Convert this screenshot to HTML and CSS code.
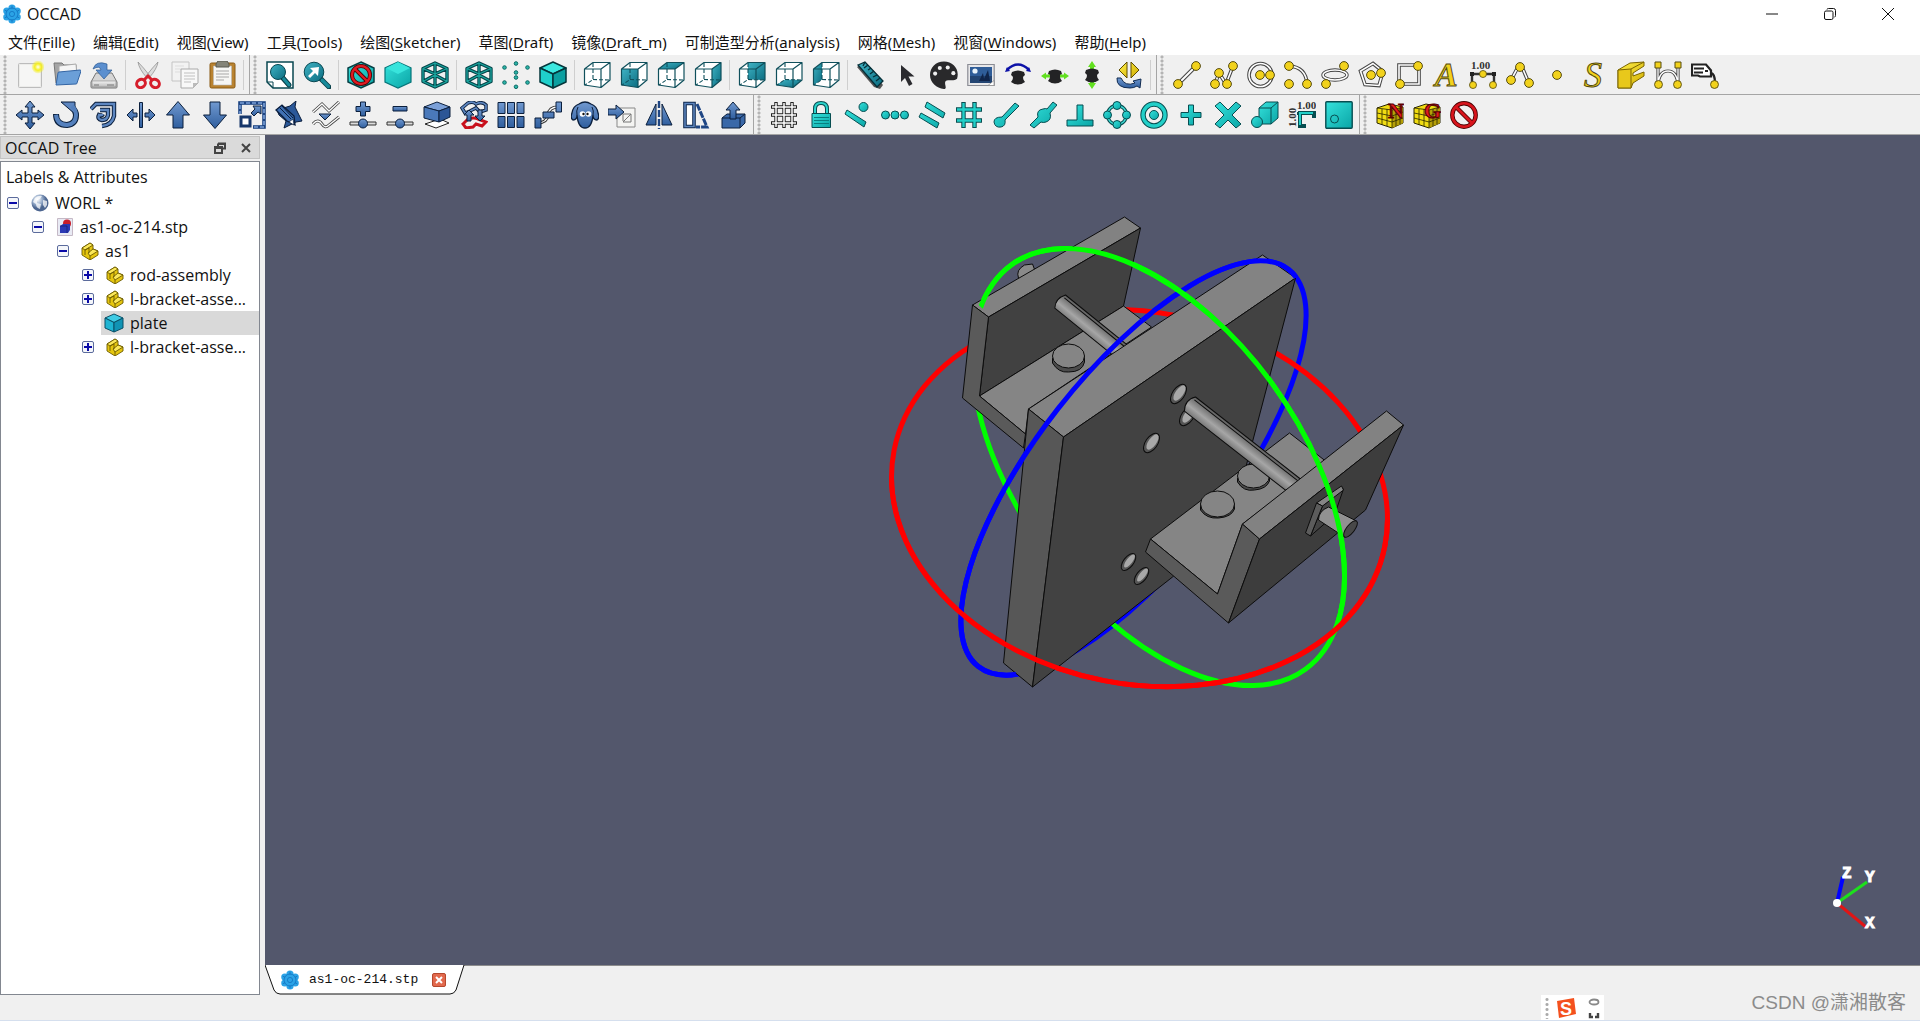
FILE: index.html
```html
<!DOCTYPE html>
<html lang="zh-CN">
<head>
  <meta charset="UTF-8" />
  <meta name="viewport" content="width=device-width, initial-scale=1.0"/>
  <title>OCCAD</title>
  <link rel="stylesheet" href="styles.css">
</head>
<body>

  <!-- icon sprite -->
  <svg class="sprite" aria-hidden="true">
    <defs>
      <linearGradient id="gBlue" x1="0" y1="0" x2="0" y2="1"><stop offset="0" stop-color="#7199d0"/><stop offset="1" stop-color="#2f5e9e"/></linearGradient>
      <linearGradient id="gTeal" x1="0" y1="0" x2="1" y2="1"><stop offset="0" stop-color="#35e2dc"/><stop offset="1" stop-color="#0aa5a6"/></linearGradient>
      <linearGradient id="gSea" x1="0" y1="0" x2="1" y2="1"><stop offset="0" stop-color="#3fb3c4"/><stop offset="1" stop-color="#0b6c80"/></linearGradient>
      <linearGradient id="gYel" x1="0" y1="0" x2="1" y2="1"><stop offset="0" stop-color="#fff04a"/><stop offset="1" stop-color="#d0ac00"/></linearGradient>
      <linearGradient id="gGrey" x1="0" y1="0" x2="0" y2="1"><stop offset="0" stop-color="#f4f4f4"/><stop offset="1" stop-color="#b9b9b9"/></linearGradient>
      <radialGradient id="gGlow"><stop offset="0" stop-color="#fffff0"/><stop offset=".5" stop-color="#f5ef20"/><stop offset="1" stop-color="#f5ef20" stop-opacity=".15"/></radialGradient>
      <radialGradient id="gGlobe" cx=".35" cy=".3"><stop offset="0" stop-color="#fff"/><stop offset=".6" stop-color="#93a9c8"/><stop offset="1" stop-color="#4d6690"/></radialGradient>
      <linearGradient id="gRod" gradientUnits="userSpaceOnUse" x1="0" y1="18" x2="0" y2="0"><stop offset="0" stop-color="#777"/><stop offset=".4" stop-color="#a6a6a6"/><stop offset="1" stop-color="#5e5e5e"/></linearGradient>

      <symbol id="logo" viewBox="0 0 20 20"><g fill="#2ba3e6"><circle cx="10" cy="4" r="3.6"/><circle cx="10" cy="16" r="3.6"/><circle cx="4.8" cy="7" r="3.6"/><circle cx="15.2" cy="7" r="3.6"/><circle cx="4.8" cy="13" r="3.6"/><circle cx="15.2" cy="13" r="3.6"/><circle cx="10" cy="10" r="5"/></g><g fill="none" stroke="#1272c0" stroke-width=".8"><circle cx="10" cy="10" r="6"/><circle cx="10" cy="10" r="2.6"/><path d="M10 1.500v3M10 15.500v3M2.600 6l2.600 1.500M14.800 12.500l2.600 1.500M2.600 14l2.600-1.500M14.800 7.500l2.600-1.500"/></g></symbol>

      <!-- file -->
      <symbol id="new" viewBox="0 0 28 28"><rect x="2.500" y="2.500" width="23" height="24" rx="1" fill="#ececea" stroke="#bcbcbc"/><rect x="4" y="4" width="20" height="21" fill="#f6f6f5"/><circle cx="22" cy="6" r="6.500" fill="url(#gGlow)"/></symbol>
      <symbol id="open" viewBox="0 0 28 28"><path d="M1 2h8l2 2h12v18H3z" fill="#a5a5a5" stroke="#777"/><path d="M6 5l17-2 1 12H6z" fill="#f5f5f5" stroke="#aaa"/><path d="M3 24L5 12q0-1 1-1l21-2q1 0 1 1l-4 12q0 1-1 1z" fill="#6b9fd8" stroke="#3465a4"/></symbol>
      <symbol id="save" viewBox="0 0 28 28"><path d="M6 12h16l5 9v5q0 1-1 1H2q-1 0-1-1v-5z" fill="#d6d6d6" stroke="#777"/><path d="M2 20h24v6H2z" fill="url(#gGrey)" stroke="#888" stroke-width=".6"/><path d="M4 24h5M17 24h7" stroke="#777"/><path d="M3 8Q6-1 17 3v6h5l-8 9-8-9h5Q10 4 3 8z" fill="#5b8fcf" stroke="#2d5a92" stroke-width=".7"/></symbol>
      <symbol id="cut" viewBox="0 0 28 28"><path d="M4 1q1 7 9 16l3-2Q9 6 4 1zM24 1q-1 7-9 16l-3-2Q19 6 24 1z" fill="#ddd" stroke="#888" stroke-width=".7"/><g fill="none" stroke="#d61f2c" stroke-width="3"><ellipse cx="7" cy="22.500" rx="4.500" ry="4" transform="rotate(-35 7 22.500)"/><ellipse cx="21" cy="22.500" rx="4.500" ry="4" transform="rotate(35 21 22.500)"/><path d="M10 19l4-4 4 4"/></g></symbol>
      <symbol id="copy" viewBox="0 0 28 28"><path d="M1 1h17v19H1z" fill="#f2f2f2" stroke="#c4c4c4"/><path d="M4 5h9M4 8h6M4 11h5" stroke="#ddd"/><path d="M10 8h17v14l-5 5H10z" fill="#f8f8f8" stroke="#aaa"/><path d="M13 12h11M13 15h11M13 18h11M13 21h7" stroke="#c0c0c0"/><path d="M27 22h-5v5z" fill="#bbb"/></symbol>
      <symbol id="paste" viewBox="0 0 28 28"><rect x="2" y="2" width="25" height="25" rx="1.500" fill="#b98331" stroke="#8a5a14"/><path d="M5.500 5h18v19h-18z" fill="#f6f6f4" stroke="#bbb" stroke-width=".6"/><path d="M8 10h13M8 13h13M8 16h13M8 19h8" stroke="#a8a8a8"/><path d="M10 0h9l2 3v3H8V3z" fill="#848478" stroke="#5a5a50"/></symbol>

      <!-- view -->
      <symbol id="fitall" viewBox="0 0 28 28"><path d="M1 1h26v26H7l-6-6z" fill="#fff" stroke="#084750" stroke-width="1.500"/><path d="M1 21h6v6" fill="none" stroke="#084750"/><path d="M16 16l7 8" stroke="#073c45" stroke-width="5" stroke-linecap="round"/><path d="M17 17l6 7" stroke="#178a9a" stroke-width="3" stroke-linecap="round"/><circle cx="12" cy="11" r="7.500" fill="url(#gSea)" stroke="#074852"/></symbol>
      <symbol id="fitsel" viewBox="0 0 28 28"><path d="M18 18l8 8" stroke="#073c45" stroke-width="5" stroke-linecap="round"/><path d="M19 19l6.500 6.500" stroke="#178a9a" stroke-width="3.200" stroke-linecap="round"/><circle cx="11" cy="11" r="9.800" fill="url(#gSea)" stroke="#074852"/><path d="M5 15l5-5-3-3 9-1-1 9-3-3-5 5z" fill="#fff"/></symbol>
      <symbol id="nostyle" viewBox="0 0 28 28"><path d="M14 1l13 6v14l-13 6-13-6V7z" fill="url(#gTeal)" stroke="#063f44" stroke-width="1.500"/><circle cx="14" cy="14" r="9" fill="none" stroke="#4d0000" stroke-width="4"/><path d="M7.500 7.500l13 13" stroke="#4d0000" stroke-width="4"/><circle cx="14" cy="14" r="9" fill="none" stroke="#e01b22" stroke-width="2.400"/><path d="M7.500 7.500l13 13" stroke="#e01b22" stroke-width="2.400"/></symbol>
      <symbol id="shaded" viewBox="0 0 28 28"><path d="M14 1l13 6v14l-13 6-13-6V7z" fill="url(#gTeal)" stroke="#07767a" stroke-width="1.200"/><path d="M14 13l12-6-12-6L2 7z" fill="#38e4dc"/></symbol>
      <symbol id="wire" viewBox="0 0 28 28"><g fill="none" stroke-linejoin="round"><path d="M14 2l12 5.500v13L14 26 2 20.500v-13zM2 7.500L14 13l12-5.500M14 13v13M14 2v11M2 20.500L14 14l12 6.500" stroke="#06454a" stroke-width="3.400"/><path d="M14 2l12 5.500v13L14 26 2 20.500v-13zM2 7.500L14 13l12-5.500M14 13v13M14 2v11M2 20.500L14 14l12 6.500" stroke="#19a69f" stroke-width="1.300"/></g></symbol>
      <symbol id="points" viewBox="0 0 28 28"><g fill="#2bb5a8" stroke="#0b6a66"><circle cx="14" cy="2.500" r="1.800"/><circle cx="2.500" cy="6.500" r="1.800"/><circle cx="25.500" cy="6.500" r="1.800"/><circle cx="14" cy="11.500" r="1.800"/><circle cx="14" cy="16.500" r="1.800"/><circle cx="2.500" cy="21.500" r="1.800"/><circle cx="25.500" cy="21.500" r="1.800"/><circle cx="14" cy="25.800" r="1.800"/></g></symbol>
      <symbol id="iso" viewBox="0 0 28 28"><g stroke="#04363b" stroke-width="1.500" stroke-linejoin="round"><path d="M14 1l13 6-13 6L1 7z" fill="#3be8e0"/><path d="M1 7l13 6v14L1 21z" fill="#1fd0cb"/><path d="M27 7l-13 6v14l13-6z" fill="#0b9fa0"/></g></symbol>
      <symbol id="boxlines" viewBox="0 0 28 28"><path d="M1.500 8h16.500v18.500L1.500 24zM1.500 8L10 1.500h17L18 8M27 1.500V19l-9 7.500" fill="none" stroke="#10505c" stroke-width="1.200" stroke-linejoin="round"/><path d="M10 2v16.500L2 24M10 18.500L27 19" fill="none" stroke="#10505c" stroke-width="1.100" stroke-dasharray="4 2"/></symbol>
      <symbol id="vaxo" viewBox="0 0 28 28"><path d="M1.500 8L10 1.500h17V19l-9 7.500L1.500 24z" fill="#fff"/><use href="#boxlines" width="28" height="28"/></symbol>
      <symbol id="vfront" viewBox="0 0 28 28"><path d="M1.500 8L10 1.500h17V19l-9 7.500L1.500 24z" fill="#fff"/><path d="M1.500 8H18v18.500L1.500 24z" fill="url(#gSea)"/><use href="#boxlines" width="28" height="28"/></symbol>
      <symbol id="vtop" viewBox="0 0 28 28"><path d="M1.500 8L10 1.500h17V19l-9 7.500L1.500 24z" fill="#fff"/><path d="M1.500 8L10 1.500h17L18 8z" fill="url(#gSea)"/><use href="#boxlines" width="28" height="28"/></symbol>
      <symbol id="vright" viewBox="0 0 28 28"><path d="M1.500 8L10 1.500h17V19l-9 7.500L1.500 24z" fill="#fff"/><path d="M18 8l9-6.500V19l-9 7.500z" fill="url(#gSea)"/><use href="#boxlines" width="28" height="28"/></symbol>
      <symbol id="vrear" viewBox="0 0 28 28"><path d="M1.500 8L10 1.500h17V19l-9 7.500L1.500 24z" fill="#fff"/><path d="M10 1.500h17V19l-17-.5z" fill="url(#gSea)"/><use href="#boxlines" width="28" height="28"/></symbol>
      <symbol id="vbottom" viewBox="0 0 28 28"><path d="M1.500 8L10 1.500h17V19l-9 7.500L1.500 24z" fill="#fff"/><path d="M1.500 24l8.500-5.500 17 .5-9 7.500z" fill="url(#gSea)"/><use href="#boxlines" width="28" height="28"/></symbol>
      <symbol id="vleft" viewBox="0 0 28 28"><path d="M1.500 8L10 1.500h17V19l-9 7.500L1.500 24z" fill="#fff"/><path d="M1.500 8L10 1.500v17L1.500 24z" fill="url(#gSea)"/><use href="#boxlines" width="28" height="28"/></symbol>
      <symbol id="measure" viewBox="0 0 28 28"><path d="M1 6l17 20 6 2 3-4L8 1z" fill="#555"/><path d="M2 4l7-3 18 19-6 6z" fill="url(#gSea)" stroke="#062f38" stroke-width="1.300"/><path d="M9 1l-2 4M12 4l-4 3M15 7l-3 2M18 10l-4 3M21 14l-4 2M24 17l-4 3" stroke="#062f38" stroke-width="1.300"/></symbol>
      <symbol id="cursor" viewBox="0 0 28 28"><path d="M8 4v17l4-4 4 8 3.500-2-4-7.500h6z" fill="#2b2b2f"/></symbol>
      <symbol id="palette" viewBox="-1 -1 30 30"><path d="M14-.5C5-.5-1 6-1 14c0 8 7 14 15 15 4 0 0-5 1.500-8 2-3 9 .5 12.500-3C31 8 24-.5 14-.5z" fill="#29292b"/><g fill="#efefef"><circle cx="4.500" cy="12.500" r="2.200"/><circle cx="9.500" cy="6.500" r="2.200"/><circle cx="18" cy="6" r="2.200"/><circle cx="24" cy="12" r="2.200"/></g></symbol>
      <symbol id="image" viewBox="0 0 28 28"><path d="M.8 3.500h26.400v21H.8z" fill="#e8e8ea" stroke="#8a8c94" stroke-width="1.200"/><path d="M3 6h22v16H3z" fill="#2f5d98"/><path d="M3 15h22v7H3z" fill="#234572"/><circle cx="8" cy="10" r="2.600" fill="#e9f4fb"/><path d="M12 20l4-8 1 6 4-9 2 11z" fill="#10254a"/><path d="M21 24.500l6-5v5z" fill="#fff" stroke="#888" stroke-width=".7"/></symbol>
      <symbol id="spinner" viewBox="0 0 28 28"><path d="M8 11q6-3 12 0l1 3q-4 2 0 7-7 5-14 0 4-5 0-7z" fill="#232325"/></symbol>
      <symbol id="rotx" viewBox="0 0 28 28"><use href="#spinner" width="28" height="28"/><path d="M3 9q11-11 22 0" fill="none" stroke="#0d12a8" stroke-width="2.500"/><path d="M1 11l2-5 3 4zM27 11l-2-5-3 4z" fill="#0d12a8"/></symbol>
      <symbol id="panh" viewBox="0 0 28 28"><use href="#spinner" y="-1" width="28" height="28"/><path d="M0 15l5-3.500v2h4v3H5v2zM28 15l-5-3.500v2h-4v3h4v2z" fill="#62e01f"/></symbol>
      <symbol id="panv" viewBox="0 0 28 28"><path d="M14 0l4 6h-2v4h-4V6h-2zM14 28l4-6h-2v-3h-4v3h-2z" fill="#62e01f"/><use href="#spinner" y="-2" width="28" height="28"/></symbol>
      <symbol id="flip" viewBox="0 0 28 28"><path d="M12 1v16L4 9zM16 1v16l8-8z" fill="url(#gYel)" stroke="#5c4b00"/><path d="M2 17q-1 10 13 10 4 0 7-2l3 2 1-9-8 2 2 2q-10 4-14-5z" fill="url(#gBlue)" stroke="#102a50"/></symbol>

      <!-- sketch -->
      <symbol id="dot" viewBox="0 0 10 10"><circle cx="5" cy="5" r="4.400" fill="#f2d21c" stroke="#554b10"/></symbol>
      <symbol id="line" viewBox="0 0 28 28"><path d="M5 23L23 5" stroke="#444" stroke-width="4"/><path d="M5 23L23 5" stroke="#fff" stroke-width="2"/><use href="#dot" x="18" width="10" height="10"/><use href="#dot" y="18" width="10" height="10"/></symbol>
      <symbol id="wirel" viewBox="0 0 28 28"><path d="M5 23L9 12l7 11L23 5" fill="none" stroke="#444" stroke-width="3.600"/><path d="M5 23L9 12l7 11L23 5" fill="none" stroke="#fff" stroke-width="1.600"/><use href="#dot" x="18" width="10" height="10"/><use href="#dot" y="18" width="10" height="10"/><use href="#dot" x="4" y="7" width="10" height="10"/><use href="#dot" x="12" y="18" width="10" height="10"/></symbol>
      <symbol id="circle" viewBox="0 0 28 28"><circle cx="13.500" cy="14" r="11.500" fill="none" stroke="#444" stroke-width="3.600"/><circle cx="13.500" cy="14" r="11.500" fill="none" stroke="#fff" stroke-width="1.600"/><use href="#dot" x="8" y="9" width="10" height="10"/><use href="#dot" x="18" y="9" width="10" height="10"/></symbol>
      <symbol id="arc" viewBox="0 0 28 28"><path d="M5 5q17 1 18 18" fill="none" stroke="#444" stroke-width="3.600"/><path d="M5 5q17 1 18 18" fill="none" stroke="#fff" stroke-width="1.600"/><use href="#dot" width="10" height="10"/><use href="#dot" y="18" width="10" height="10"/><use href="#dot" x="18" y="18" width="10" height="10"/></symbol>
      <symbol id="ellipse" viewBox="0 0 28 28"><ellipse cx="14" cy="14" rx="12" ry="5" fill="none" stroke="#444" stroke-width="3.400"/><ellipse cx="14" cy="14" rx="12" ry="5" fill="none" stroke="#fff" stroke-width="1.500"/><use href="#dot" x="18" width="10" height="10"/><use href="#dot" y="18" width="10" height="10"/></symbol>
      <symbol id="polygon" viewBox="0 0 28 28"><path d="M15 2.500l10 8-4 14-14-1L2.500 10z" fill="none" stroke="#444" stroke-width="3.600"/><path d="M15 2.500l10 8-4 14-14-1L2.500 10z" fill="none" stroke="#fff" stroke-width="1.600"/><use href="#dot" x="8" y="9" width="10" height="10"/><use href="#dot" x="18" y="7" width="10" height="10"/></symbol>
      <symbol id="rect" viewBox="0 0 28 28"><path d="M4 4h20v19H4z" fill="none" stroke="#444" stroke-width="3.600"/><path d="M4 4h20v19H4z" fill="none" stroke="#fff" stroke-width="1.600"/><use href="#dot" x="18" width="10" height="10"/><use href="#dot" y="18" width="10" height="10"/></symbol>
      <symbol id="text" viewBox="0 0 28 28"><text x="3" y="25" class="glyph-a">A</text></symbol>
      <symbol id="dim" viewBox="0 0 28 28"><text x="2" y="8" class="glyph-dim">1.00</text><path d="M3 23V13h22v10" fill="none" stroke="#333" stroke-width="2.400"/><path d="M1 11h4v4H1zM23 11h4v4h-4z" fill="#222"/><use href="#dot" x="10" y="9" width="8" height="8"/><use href="#dot" y="20" width="8" height="8"/><use href="#dot" x="20" y="20" width="8" height="8"/></symbol>
      <symbol id="bspline" viewBox="0 0 28 28"><path d="M5 19L12 6h4l6 14" fill="none" stroke="#444" stroke-width="3.600"/><path d="M5 19L12 6h4l6 14" fill="none" stroke="#fff" stroke-width="1.600"/><use href="#dot" x="9" y="1" width="10" height="10"/><use href="#dot" y="14" width="10" height="10"/><use href="#dot" x="18" y="17" width="10" height="10"/></symbol>
      <symbol id="point" viewBox="0 0 28 28"><use href="#dot" x="9" y="9" width="10" height="10"/></symbol>
      <symbol id="shapestring" viewBox="0 0 28 28"><text x="4" y="26" class="glyph-s">S</text></symbol>
      <symbol id="facebinder" viewBox="0 0 28 28"><path d="M1 9L13 2l14-1v4l-11 7v3l11-4v4l-11 7-2 5H1z" fill="url(#gYel)" stroke="#7a6400"/><path d="M1 9l13-1v19H1z" fill="#e8c81b" stroke="#7a6400"/><path d="M14 8L27 1" stroke="#7a6400"/></symbol>
      <symbol id="bezier" viewBox="0 0 28 28"><path d="M4 4v20M24 4v20M4 24Q5 10 14 10t10 14" fill="none" stroke="#444" stroke-width="3.200"/><path d="M4 4v20M24 4v20M4 24Q5 10 14 10t10 14" fill="none" stroke="#fff" stroke-width="1.300"/><path d="M1 1h6v6H1zM21 1h6v6h-6z" fill="#f2d21c" stroke="#554b10"/><use href="#dot" y="19" width="9" height="9"/><use href="#dot" x="19" y="19" width="9" height="9"/></symbol>
      <symbol id="label" viewBox="0 0 28 28"><path d="M1 3.500h14l5 6v6H9l-2-1H1z" fill="#fff" stroke="#222" stroke-width="2.200"/><path d="M3 7.500h10M3 11.500h9M14 10h3" stroke="#222" stroke-width="2"/><path d="M20 12q4 1 4 10" fill="none" stroke="#222" stroke-width="2.400"/><use href="#dot" x="19" y="19" width="9" height="9"/></symbol>

      <!-- draft -->
      <symbol id="move" viewBox="0 0 28 28"><path d="M14 0l5 6h-3v6h6V9l6 5-6 5v-3h-6v6h3l-5 6-5-6h3v-6H6v3l-6-5 6-5v3h6V6H9z" fill="url(#gBlue)" stroke="#0b1f3c"/></symbol>
      <symbol id="rotate" viewBox="0 0 28 28"><path d="M3 13q0 11 11 11 9-1 9-10 0-4-4-8" fill="none" stroke="#0b1f3c" stroke-width="6"/><path d="M8 1h14v12z" fill="#5d86c0" stroke="#0b1f3c"/><path d="M3 13.800q1 10.200 11 10.200 9-1 9-10 0-5-4-9" fill="none" stroke="#5480bd" stroke-width="4"/></symbol>
      <symbol id="offset" viewBox="0 0 28 28"><path d="M1 8l5-5h18v12q-2 9-12 10M10 9h8v5q-1 5-6 5-5-1-3-5 3 1 4-1" fill="none" stroke="#0b1f3c" stroke-width="4.400"/><path d="M1 8l5-5h18v12q-2 9-12 10M10 9h8v5q-1 5-6 5-5-1-3-5 3 1 4-1" fill="none" stroke="#5d86c0" stroke-width="2.400"/></symbol>
      <symbol id="trimex" viewBox="0 0 28 28"><path d="M12.500 1.500h3v25h-3zM0 14l6-6v4h4v4H6v4zM28 14l-6-6v4h-4v4h4v4z" fill="url(#gBlue)" stroke="#0b1f3c"/></symbol>
      <symbol id="up" viewBox="0 0 28 28"><path d="M14 .5L25.500 14H19v13H9V14H2.500z" fill="url(#gBlue)" stroke="#0b1f3c"/></symbol>
      <symbol id="down" viewBox="0 0 28 28"><path d="M14 27.500L25.500 14H19V1H9v13H2.500z" fill="url(#gBlue)" stroke="#0b1f3c"/></symbol>
      <symbol id="scale" viewBox="0 0 28 28"><rect x="2" y="2" width="24" height="24" fill="none" stroke="#1d4583" stroke-width="3.600"/><rect x="2" y="2" width="24" height="24" fill="none" stroke="#7ba0d8" stroke-width="1.600" stroke-dasharray="4 2"/><path d="M0 13h15v15H0z" fill="#efefef"/><path d="M3 16h9v9H3z" fill="#fff" stroke="#16376b" stroke-width="3"/><path d="M13 12l4-4-2-3h8v8l-3-2-4 4z" fill="url(#gBlue)" stroke="#0b1f3c"/></symbol>
      <symbol id="edit" viewBox="0 0 28 28"><path d="M2 9l13-4 6-5-1 6 7 14-6 1-12 6 2-7-7-6z" fill="#2b5899" stroke="#081c3c"/><path d="M1 9l6-5 12 11 1 9-8-4z" fill="#3f70b3" stroke="#081c3c" stroke-width="1.300"/><path d="M4 6l12 12M7 5l11 12" stroke="#081c3c"/><path d="M14 21l4-3 1 6z" fill="#fff" stroke="#081c3c" stroke-width=".7"/></symbol>
      <symbol id="w2b" viewBox="0 0 28 28"><g fill="none" stroke="#444" stroke-width="3"><path d="M1 11L10 3l7 7L27 1M1 23q5-6 9 0 3 5 7 1l10-8"/></g><g fill="none" stroke="#fff" stroke-width="1.300"><path d="M1 11L10 3l7 7L27 1M1 23q5-6 9 0 3 5 7 1l10-8"/></g><path d="M7 13h12l-6 6z" fill="url(#gBlue)" stroke="#0b1f3c"/></symbol>
      <symbol id="addp" viewBox="0 0 28 28"><path d="M11.500 1h5v4.500H21v5h-4.500V15h-5v-4.500H7v-5h4.500z" fill="url(#gBlue)" stroke="#0b1f3c"/><path d="M1 21h26v3H1z" fill="#ddd" stroke="#333"/><circle cx="14" cy="22.500" r="4.500" fill="url(#gBlue)" stroke="#0b1f3c"/></symbol>
      <symbol id="delp" viewBox="0 0 28 28"><path d="M7 5.500h14v4.500H7z" fill="url(#gBlue)" stroke="#0b1f3c"/><path d="M1 21h26v3H1z" fill="#ddd" stroke="#333"/><circle cx="14" cy="22.500" r="4.500" fill="url(#gBlue)" stroke="#0b1f3c"/></symbol>
      <symbol id="shape2d" viewBox="0 0 28 28"><path d="M2 23l11 4 13-5-9-4z" fill="#fff" stroke="#222"/><g stroke="#0b1f3c"><path d="M1 6l13-5 13 5-11 4z" fill="#7ba0d8"/><path d="M1 6l15 4v11L1 17z" fill="#4a79ba"/><path d="M16 10l11-4v10l-11 5z" fill="#2c5696"/></g></symbol>
      <symbol id="toggle" viewBox="0 0 28 28"><path d="M3 23l5-5q6-2 10 0l8 3-4 4-6-2-3 3-7 1z" fill="none" stroke="#c8101c" stroke-width="3"/><path d="M2 7l6-5q5-2 8 1 6-3 10 1v5l-6 2-4-4-6 3-5 2z" fill="none" stroke="#0b1f3c" stroke-width="3.500"/><path d="M2 7l6-5q5-2 8 1 6-3 10 1v5l-6 2-4-4-6 3-5 2z" fill="none" stroke="#5d86c0" stroke-width="1.700"/><path d="M9 9l5 5h-3v6H7v-6H4zM20 20l-5-5h3V9h4v6h3z" fill="url(#gBlue)" stroke="#0b1f3c"/></symbol>
      <symbol id="array" viewBox="0 0 28 28"><g fill="url(#gBlue)" stroke="#0b1f3c"><path d="M1 1.500h7v11H1zM10.500 1.500h7v11h-7zM20 1.500h7v11h-7zM1 15.500h7v11H1zM10.500 15.500h7v11h-7zM20 15.500h7v11h-7z"/></g></symbol>
      <symbol id="patharr" viewBox="0 0 28 28"><path d="M3 22q10 0 11-8 1-8 10-8" fill="none" stroke="#333" stroke-width="3.200"/><path d="M3 22q10 0 11-8 1-8 10-8" fill="none" stroke="#fff" stroke-width="1.300"/><g fill="url(#gBlue)" stroke="#0b1f3c"><path d="M1 17h6v10H1zM9 11h11v6H9zM22 1h5.500v10H22z"/></g></symbol>
      <symbol id="clone" viewBox="0 0 28 28"><path d="M8 3q6-4 12 0 6 2 7 9 2 5-1 7-4 0-4-5-1 13-8 13T6 14q0 5-4 5-3-2-1-7 1-7 7-9z" fill="url(#gBlue)" stroke="#0b1f3c" stroke-width="1.300"/><path d="M6 14q-1-4 1-8M22 14q1-4-1-8" fill="none" stroke="#0b1f3c"/><circle cx="11.500" cy="13" r="2.800" fill="#fff"/><circle cx="17.500" cy="13" r="2.800" fill="#fff"/><circle cx="12.500" cy="13" r="1.200" fill="#111"/><circle cx="16.500" cy="13" r="1.200" fill="#111"/></symbol>
      <symbol id="drawing" viewBox="0 0 28 28"><path d="M9 7h18v19H9z" fill="#f4f4f2" stroke="#888"/><path d="M15 20V13h8v8h-8l8-8" fill="none" stroke="#777"/><path d="M0 8h8V4l8 7-8 7v-4H0z" fill="url(#gBlue)" stroke="#0b1f3c"/></symbol>
      <symbol id="mirror" viewBox="0 0 28 28"><path d="M11 3v21H1zM17 3v21h10z" fill="url(#gBlue)" stroke="#0b1f3c"/><path d="M14 0v28" stroke="#1f4684" stroke-width="2.400" stroke-dasharray="7 2"/></symbol>
      <symbol id="stretch" viewBox="0 0 28 28"><path d="M3 2.500h9v23H3z" fill="#fff" stroke="#102a50" stroke-width="3.600"/><path d="M3 2.500h9v23H3z" fill="none" stroke="#5d86c0" stroke-width="1.500"/><path d="M15 3l10 23H14" fill="none" stroke="#1f4684" stroke-width="3" stroke-dasharray="7 1"/></symbol>
      <symbol id="upgrade" viewBox="0 0 28 28"><path d="M3 17l5-4h18v9l-5 5H3z" fill="#3a68a8" stroke="#0b1f3c"/><path d="M3 17h18v10M21 17l5-4" fill="none" stroke="#0b1f3c"/><path d="M14 1l7 8h-4v9h-6V9H7z" fill="url(#gBlue)" stroke="#0b1f3c"/></symbol>

      <!-- snap -->
      <symbol id="grid" viewBox="0 0 28 28"><path d="M1 6h26M1 14h26M1 22h26M6 1v26M14 1v26M22 1v26" stroke="#222" stroke-width="3.400"/><path d="M2 6h24M2 14h24M2 22h24M6 2v24M14 2v24M22 2v24" stroke="#fff" stroke-width="1.500"/></symbol>
      <symbol id="lock" viewBox="0 0 28 28"><path d="M8 13V8q0-6 6-6t6 6v5" fill="none" stroke="#074d50" stroke-width="4"/><path d="M8 13V8q0-6 6-6t6 6v5" fill="none" stroke="#2bd3cc" stroke-width="2"/><path d="M5 12.500h18.500v14H5z" fill="url(#gTeal)" stroke="#074d50"/><path d="M7 16.500h15M7 19.500h15M7 22.500h15" stroke="#087f80"/></symbol>
      <symbol id="smid" viewBox="0 0 28 28"><g fill="url(#gTeal)" stroke="#074d50"><path d="M3 9l19 12-2 5L1 13z"/><circle cx="19.500" cy="6" r="4.500"/></g></symbol>
      <symbol id="sdots" viewBox="0 0 28 28"><g fill="url(#gTeal)" stroke="#074d50"><circle cx="4.500" cy="14" r="4"/><circle cx="14" cy="14" r="4"/><circle cx="23.500" cy="14" r="4"/></g></symbol>
      <symbol id="sparallel" viewBox="0 0 28 28"><g fill="url(#gTeal)" stroke="#074d50"><path d="M9 1l18 11-2 5L7 6zM3 12l18 10-2 5L1 16z"/></g></symbol>
      <symbol id="sgrid" viewBox="0 0 28 28"><path d="M1 8.500h26M1 19.500h26M8.500 1v26M19.500 1v26" stroke="#074d50" stroke-width="4.400"/><path d="M2 8.500h24M2 19.500h24M8.500 2v24M19.500 2v24" stroke="#22cfc8" stroke-width="2.400"/></symbol>
      <symbol id="sendp" viewBox="0 0 28 28"><path d="M10 16L23 2l4 3-14 14q1 6-4 7-6 1-7-5 0-5 8-5z" fill="url(#gTeal)" stroke="#074d50"/></symbol>
      <symbol id="snear" viewBox="0 0 28 28"><path d="M1 24l8-8q-2-7 5-8 3-1 4 0l6-7 4 3-7 8q2 7-4 9-3 1-5 0l-7 6z" fill="url(#gTeal)" stroke="#074d50"/></symbol>
      <symbol id="sperp" viewBox="0 0 28 28"><path d="M11 4h6v15h10v6H1v-6h10z" fill="url(#gTeal)" stroke="#074d50"/></symbol>
      <symbol id="sangle" viewBox="0 0 28 28"><circle cx="14" cy="14" r="9.500" fill="none" stroke="#074d50" stroke-width="3.400"/><circle cx="14" cy="14" r="9.500" fill="none" stroke="#3fded8" stroke-width="1.400"/><g fill="url(#gTeal)" stroke="#074d50"><circle cx="14" cy="4.500" r="4"/><circle cx="14" cy="23.500" r="4"/><circle cx="4.500" cy="14" r="4"/><circle cx="23.500" cy="14" r="4"/></g></symbol>
      <symbol id="scenter" viewBox="0 0 28 28"><circle cx="14" cy="14" r="11" fill="none" stroke="#074d50" stroke-width="5.400"/><circle cx="14" cy="14" r="11" fill="none" stroke="#22cfc8" stroke-width="3.400"/><circle cx="14" cy="14" r="4.500" fill="url(#gTeal)" stroke="#074d50"/></symbol>
      <symbol id="sortho" viewBox="0 0 28 28"><path d="M11.500 4h5v7.500H24v5h-7.500V24h-5v-7.500H4v-5h7.500z" fill="url(#gTeal)" stroke="#074d50"/></symbol>
      <symbol id="sinter" viewBox="0 0 28 28"><path d="M6 1l8 8 8-8 5 4-9 9 9 9-5 4-8-8-8 8-5-4 9-9-9-9z" fill="url(#gTeal)" stroke="#074d50"/></symbol>
      <symbol id="sspecial" viewBox="0 0 28 28"><path d="M8 7l7-6h12v16l-7 6H8z" fill="url(#gTeal)" stroke="#074d50"/><path d="M8 7h12v16M20 7l7-6" fill="none" stroke="#074d50"/><circle cx="6" cy="21" r="5.500" fill="url(#gTeal)" stroke="#074d50"/></symbol>
      <symbol id="sdim" viewBox="0 0 28 28"><text x="9" y="8" class="glyph-dim">1.00</text><text x="-26" y="8" class="glyph-dim" transform="rotate(-90)">1.00</text><path d="M12 25V12h14M11 11v3M26 10v7M10 25h8" fill="none" stroke="#074d50" stroke-width="4"/><path d="M12 24V12h13" fill="none" stroke="#22cfc8" stroke-width="2"/></symbol>
      <symbol id="swp" viewBox="0 0 28 28"><rect x=".8" y=".8" width="26.400" height="26.400" rx="1" fill="url(#gTeal)" stroke="#074d50" stroke-width="1.400"/><circle cx="9.500" cy="18" r="4" fill="none" stroke="#074d50"/></symbol>

      <!-- mesh -->
      <symbol id="meshcube" viewBox="0 0 28 28"><path d="M1 7l12-4 14 3v16l-11 5-15-5z" fill="#f0dc12" stroke="#2a2600"/><path d="M16 9l11-3v16l-11 5z" fill="#b59f08"/><path d="M1 7l15 2 11-3M16 9v18M6 8v16M11 8v17M1 12l15 3 11-4M1 17l15 4 11-4M20 8v17M24 7v16" fill="none" stroke="#2a2600" stroke-width=".8"/></symbol>
      <symbol id="netn" viewBox="0 0 28 28"><use href="#meshcube" width="28" height="28"/><text x="12" y="17" class="glyph-mesh">N</text></symbol>
      <symbol id="netg" viewBox="0 0 28 28"><use href="#meshcube" width="28" height="28"/><text x="11" y="17" class="glyph-mesh">G</text></symbol>
      <symbol id="stop" viewBox="0 0 28 28"><g fill="none" stroke="#4d0000" stroke-width="4.400"><circle cx="14" cy="14" r="11.700"/><path d="M6 6l16 16"/></g><g fill="none" stroke="#d8141c" stroke-width="2.600"><circle cx="14" cy="14" r="11.700"/><path d="M6 6l16 16"/></g></symbol>

      <!-- tree -->
      <symbol id="globe" viewBox="0 0 18 18"><circle cx="9" cy="9" r="8.500" fill="url(#gGlobe)"/><path d="M4 4q4-3 7-2l-2 3-3 1v3l4 1-1 5q-4-1-4-5L2 8zM12 6l4 1v4l-2 3-2-3z" fill="#fff" opacity=".75"/></symbol>
      <symbol id="doc" viewBox="0 0 18 18"><path d="M1.500.5h15v17h-15z" fill="#e8eaf4" stroke="#c5b9c6"/><circle cx="11" cy="5.500" r="4" fill="#c81e2b"/><path d="M4 8l3-2h7v6l-2 3H4z" fill="#2b39b4"/><path d="M4 8h7v7" fill="none" stroke="#101c70" stroke-width=".7"/></symbol>
      <symbol id="asm" viewBox="0 0 18 18"><g stroke="#6b5a00" stroke-width=".9" stroke-linejoin="round"><path d="M1 6l8-5 3 2v4l5 2v4l-8 5-8-5z" fill="#e5c60f"/><path d="M1 6l8-5 3 2-8 5zM7 11l5-4 5 2-8 5z" fill="#fbe85a"/><path d="M4 8v5M4 8l4-2v5M9 14v4" fill="none"/></g></symbol>
      <symbol id="part" viewBox="0 0 20 20"><g stroke="#0b4f66" stroke-linejoin="round"><path d="M10 1l9 4-9 4.500L1 5z" fill="#3fcbe4"/><path d="M1 5l9 4.500V19l-9-4z" fill="#1fb4d2"/><path d="M19 5l-9 4.500V19l9-4z" fill="#1193b4"/></g></symbol>
    </defs>
  </svg>

  <header class="titlebar">
    <svg class="app-icon"><use href="#logo"/></svg>
    <span class="app-name">OCCAD</span>
    <div class="window-buttons">
      <button aria-label="最小化"><svg viewBox="0 0 14 14"><path d="M1 7h12"/></svg></button>
      <button aria-label="还原"><svg viewBox="0 0 14 14"><rect x="1.500" y="4" width="8.500" height="8.500" rx="1.500"/><path d="M4 2.500q0-1 1.500-1h5q2 0 2 2v5q0 1.500-1 1.500"/></svg></button>
      <button aria-label="关闭"><svg viewBox="0 0 14 14"><path d="M1 1l12 12M13 1L1 13"/></svg></button>
    </div>
  </header>

  <nav class="menubar">
    <button>文件(<u>F</u>ille)</button>
    <button>编辑(<u>E</u>dit)</button>
    <button>视图(<u>V</u>iew)</button>
    <button>工具(<u>T</u>ools)</button>
    <button>绘图(<u>S</u>ketcher)</button>
    <button>草图(<u>D</u>raft)</button>
    <button>镜像(<u>D</u>raft_m)</button>
    <button>可制造型分析(<u>a</u>nalysis)</button>
    <button>网格(<u>M</u>esh)</button>
    <button>视窗(<u>W</u>indows)</button>
    <button>帮助(<u>H</u>elp)</button>
  </nav>

  <div class="toolbar-row">
    <div class="toolbar">
      <button aria-label="新建"><svg><use href="#new"/></svg></button>
      <button aria-label="打开"><svg><use href="#open"/></svg></button>
      <button aria-label="保存"><svg><use href="#save"/></svg></button>
      <span class="sep"></span>
      <button aria-label="剪切"><svg><use href="#cut"/></svg></button>
      <button aria-label="复制"><svg><use href="#copy"/></svg></button>
      <button aria-label="粘贴"><svg><use href="#paste"/></svg></button>
      <span class="sep"></span>
    </div>
    <div class="toolbar">
      <button aria-label="全部适合"><svg><use href="#fitall"/></svg></button>
      <button aria-label="适合选择"><svg><use href="#fitsel"/></svg></button>
      <span class="sep"></span>
      <button aria-label="无样式"><svg><use href="#nostyle"/></svg></button>
      <button aria-label="着色"><svg><use href="#shaded"/></svg></button>
      <button aria-label="线框"><svg><use href="#wire"/></svg></button>
      <span class="sep"></span>
      <button aria-label="隐藏线"><svg><use href="#wire"/></svg></button>
      <button aria-label="点"><svg><use href="#points"/></svg></button>
      <button aria-label="带边着色"><svg><use href="#iso"/></svg></button>
      <span class="sep"></span>
      <button aria-label="轴测"><svg><use href="#vaxo"/></svg></button>
      <button aria-label="前视"><svg><use href="#vfront"/></svg></button>
      <button aria-label="俯视"><svg><use href="#vtop"/></svg></button>
      <button aria-label="右视"><svg><use href="#vright"/></svg></button>
      <span class="sep"></span>
      <button aria-label="后视"><svg><use href="#vrear"/></svg></button>
      <button aria-label="仰视"><svg><use href="#vbottom"/></svg></button>
      <button aria-label="左视"><svg><use href="#vleft"/></svg></button>
      <span class="sep"></span>
      <button aria-label="测量"><svg><use href="#measure"/></svg></button>
      <button aria-label="选择"><svg><use href="#cursor"/></svg></button>
      <button aria-label="颜色"><svg><use href="#palette"/></svg></button>
      <button aria-label="背景"><svg><use href="#image"/></svg></button>
      <button aria-label="旋转"><svg><use href="#rotx"/></svg></button>
      <button aria-label="水平移动"><svg><use href="#panh"/></svg></button>
      <button aria-label="垂直移动"><svg><use href="#panv"/></svg></button>
      <button aria-label="翻转"><svg><use href="#flip"/></svg></button>
      <span class="sep"></span>
    </div>
    <div class="toolbar last">
      <button aria-label="直线"><svg><use href="#line"/></svg></button>
      <button aria-label="多段线"><svg><use href="#wirel"/></svg></button>
      <button aria-label="圆"><svg><use href="#circle"/></svg></button>
      <button aria-label="圆弧"><svg><use href="#arc"/></svg></button>
      <button aria-label="椭圆"><svg><use href="#ellipse"/></svg></button>
      <button aria-label="多边形"><svg><use href="#polygon"/></svg></button>
      <button aria-label="矩形"><svg><use href="#rect"/></svg></button>
      <button aria-label="文字"><svg><use href="#text"/></svg></button>
      <button aria-label="标注"><svg><use href="#dim"/></svg></button>
      <button aria-label="B样条"><svg><use href="#bspline"/></svg></button>
      <button aria-label="单点"><svg><use href="#point"/></svg></button>
      <button aria-label="字形"><svg><use href="#shapestring"/></svg></button>
      <button aria-label="面绑定"><svg><use href="#facebinder"/></svg></button>
      <button aria-label="贝塞尔"><svg><use href="#bezier"/></svg></button>
      <button aria-label="标签"><svg><use href="#label"/></svg></button>
    </div>
  </div>

  <div class="toolbar-row">
    <div class="toolbar">
      <button aria-label="移动"><svg><use href="#move"/></svg></button>
      <button aria-label="转动"><svg><use href="#rotate"/></svg></button>
      <button aria-label="偏移"><svg><use href="#offset"/></svg></button>
      <button aria-label="修剪"><svg><use href="#trimex"/></svg></button>
      <button aria-label="上移"><svg><use href="#up"/></svg></button>
      <button aria-label="下移"><svg><use href="#down"/></svg></button>
      <button aria-label="缩放"><svg><use href="#scale"/></svg></button>
      <button aria-label="编辑"><svg><use href="#edit"/></svg></button>
      <button aria-label="线转样条"><svg><use href="#w2b"/></svg></button>
      <button aria-label="加点"><svg><use href="#addp"/></svg></button>
      <button aria-label="减点"><svg><use href="#delp"/></svg></button>
      <button aria-label="二维投影"><svg><use href="#shape2d"/></svg></button>
      <button aria-label="草图转换"><svg><use href="#toggle"/></svg></button>
      <button aria-label="阵列"><svg><use href="#array"/></svg></button>
      <button aria-label="路径阵列"><svg><use href="#patharr"/></svg></button>
      <button aria-label="克隆"><svg><use href="#clone"/></svg></button>
      <button aria-label="工程图"><svg><use href="#drawing"/></svg></button>
      <button aria-label="镜像"><svg><use href="#mirror"/></svg></button>
      <button aria-label="拉伸"><svg><use href="#stretch"/></svg></button>
      <button aria-label="升级"><svg><use href="#upgrade"/></svg></button>
    </div>
    <div class="toolbar">
      <button aria-label="栅格"><svg><use href="#grid"/></svg></button>
      <button aria-label="锁定"><svg><use href="#lock"/></svg></button>
      <button aria-label="中点"><svg><use href="#smid"/></svg></button>
      <button aria-label="延长"><svg><use href="#sdots"/></svg></button>
      <button aria-label="平行"><svg><use href="#sparallel"/></svg></button>
      <button aria-label="捕捉栅格"><svg><use href="#sgrid"/></svg></button>
      <button aria-label="端点"><svg><use href="#sendp"/></svg></button>
      <button aria-label="最近点"><svg><use href="#snear"/></svg></button>
      <button aria-label="垂直"><svg><use href="#sperp"/></svg></button>
      <button aria-label="角度"><svg><use href="#sangle"/></svg></button>
      <button aria-label="圆心"><svg><use href="#scenter"/></svg></button>
      <button aria-label="正交"><svg><use href="#sortho"/></svg></button>
      <button aria-label="交点"><svg><use href="#sinter"/></svg></button>
      <button aria-label="特殊点"><svg><use href="#sspecial"/></svg></button>
      <button aria-label="尺寸捕捉"><svg><use href="#sdim"/></svg></button>
      <button aria-label="工作平面"><svg><use href="#swp"/></svg></button>
    </div>
    <div class="toolbar last">
      <button aria-label="Netgen"><svg><use href="#netn"/></svg></button>
      <button aria-label="Gmsh"><svg><use href="#netg"/></svg></button>
      <button aria-label="清除"><svg><use href="#stop"/></svg></button>
    </div>
  </div>

  <div class="workspace">
    <aside class="dock">
      <div class="dock-title">
        <span>OCCAD Tree</span>
        <button aria-label="浮动"><svg viewBox="0 0 12 12"><path d="M4 1.500h7v5H8.500M4 1.500V4M4 2h7" /><path d="M1 5h7v6H1zM1 6h7"/></svg></button>
        <button aria-label="关闭面板"><svg viewBox="0 0 12 12"><path d="M2 2l8 8M10 2l-8 8"/></svg></button>
      </div>
      <div class="tree">
        <div class="tree-header">Labels &amp; Attributes</div>
        <ul>
          <li><div class="node"><button class="expander minus" aria-label="折叠"></button><svg><use href="#globe"/></svg><span>WORL *</span></div>
            <ul>
              <li><div class="node"><button class="expander minus" aria-label="折叠"></button><svg><use href="#doc"/></svg><span>as1-oc-214.stp</span></div>
                <ul>
                  <li><div class="node"><button class="expander minus" aria-label="折叠"></button><svg><use href="#asm"/></svg><span>as1</span></div>
                    <ul>
                      <li><div class="node"><button class="expander plus" aria-label="展开"></button><svg><use href="#asm"/></svg><span>rod-assembly</span></div></li>
                      <li><div class="node"><button class="expander plus" aria-label="展开"></button><svg><use href="#asm"/></svg><span>l-bracket-asse...</span></div></li>
                      <li><div class="node leaf selected"><svg><use href="#part"/></svg><span>plate</span></div></li>
                      <li><div class="node"><button class="expander plus" aria-label="展开"></button><svg><use href="#asm"/></svg><span>l-bracket-asse...</span></div></li>
                    </ul>
                  </li>
                </ul>
              </li>
            </ul>
          </li>
        </ul>
      </div>
    </aside>

    <main class="document">
      <div class="viewport">
        <svg class="scene" viewBox="265 135 1654 830" role="img" aria-label="as1-oc-214">
          <defs>
            <clipPath id="cRed"><path d="M860 474L1410 522V720H860z"/></clipPath>
            <clipPath id="cGreen"><path d="M976 303L1337 634H1400V220H960z"/></clipPath>
            <clipPath id="cBlue"><path d="M1298 276L1262 300L1018 640V668L1000 700H900V220H1298z"/></clipPath>
            <ellipse id="ringRed" cx="1139" cy="498" rx="250" ry="186" transform="rotate(11 1139 498)"/>
            <ellipse id="ringGreen" cx="1158" cy="467" rx="250" ry="141" transform="rotate(54 1158 467)"/>
            <ellipse id="ringBlue" cx="1133" cy="468" rx="252" ry="96" transform="rotate(-52 1133 468)"/>
          </defs>
          <g fill="none" stroke-width="5">
            <use href="#ringBlue" stroke="#00f"/>
            <use href="#ringGreen" stroke="#0f0"/>
            <use href="#ringRed" stroke="#f00"/>
          </g>
          <g stroke="#0c0c0c" stroke-width="1" stroke-linejoin="round">
            <!-- rear bracket -->
            <path d="M1018 278q-3-8 6-13l8-1 3 8-14 9z" fill="#8a8a8a"/>
            <path d="M1124 217l16 11-152 89-16-12z" fill="#828282"/>
            <path d="M1140 228l-17 78-144 90 9-79z" fill="#414141"/>
            <path d="M979 396l144-90 28 21-123 82-3 25z" fill="#858585"/>
            <path d="M972 305l16 12-9 79 46 38-2 14-61-50z" fill="#5a5a5a"/>
            <path d="M1052 358v5q6 10 16 9 14 0 16-10v-6z" fill="#4c4c4c"/>
            <ellipse cx="1068" cy="356" rx="16" ry="12" fill="#858585"/>
            <g transform="translate(1065 295) rotate(39)"><path d="M0 0H100V17H0q-6-8 0-17z" fill="url(#gRod)"/><path d="M1 3h99" fill="none"/></g>
            <!-- plate -->
            <path d="M1262 255l33 23-232 159-35-28z" fill="#838383"/>
            <path d="M1028 409l35 28-31 250-29-24z" fill="#575757"/>
            <path d="M1063 437l232-159-63 240-60 59-140 110z" fill="#424242"/>
            <!-- drilled holes: dark rim with a lit bore -->
            <g fill="#555">
              <ellipse cx="1178" cy="394" rx="6" ry="11" transform="rotate(35 1178 394)"/>
              <ellipse cx="1187" cy="416" rx="6" ry="11" transform="rotate(35 1187 416)"/>
              <ellipse cx="1151" cy="443" rx="6" ry="11" transform="rotate(35 1151 443)"/>
              <ellipse cx="1128" cy="562" rx="5" ry="10" transform="rotate(38 1128 562)"/>
              <ellipse cx="1141" cy="576" rx="5" ry="10" transform="rotate(38 1141 576)"/>
            </g>
            <g fill="#a8a8a8" stroke="none">
              <ellipse cx="1179" cy="393" rx="4" ry="9" transform="rotate(35 1179 393)"/>
              <ellipse cx="1188" cy="415" rx="4" ry="9" transform="rotate(35 1188 415)"/>
              <ellipse cx="1152" cy="442" rx="4" ry="9" transform="rotate(35 1152 442)"/>
              <ellipse cx="1129" cy="561" rx="3" ry="8" transform="rotate(38 1129 561)"/>
              <ellipse cx="1142" cy="575" rx="3" ry="8" transform="rotate(38 1142 575)"/>
            </g>
            <!-- front bracket -->
            <path d="M1150 539l139-106 36 28-83 63-25 70z" fill="#858585"/>
            <path d="M1237 478v4q6 10 17 8 12-1 15-9v-5z" fill="#4c4c4c"/>
            <ellipse cx="1253" cy="476" rx="16" ry="12" fill="#858585"/>
            <path d="M1200 505v5q6 9 18 8 13-1 16-9v-5z" fill="#4c4c4c"/>
            <ellipse cx="1217" cy="504" rx="17" ry="13" fill="#858585"/>
            <g transform="translate(1195 397) rotate(38)"><path d="M0 0H134V18H0q-7-9 0-18z" fill="url(#gRod)"/><path d="M1 3h133" fill="none"/></g>
            <path d="M1150 539l67 55 25-70 17 15-31 84-83-71z" fill="#5a5a5a"/>
            <path d="M1242 524l144-113 17 14-144 114z" fill="#828282"/>
            <path d="M1259 539l144-114-38 85-137 113z" fill="#3d3d3d"/>
            <!-- nut and rod end -->
            <path d="M1322 506l21-17-9 26-24 21z" fill="#444"/>
            <path d="M1316 503l25-17 2 4-21 16z" fill="#858585"/>
            <path d="M1316 503l6 3-12 30-5-3z" fill="#5c5c5c"/>
            <path d="M1328 507l28 14-12 16-26-17q0-9 10-13z" fill="#919191"/>
            <ellipse cx="1350" cy="529" rx="4" ry="10" transform="rotate(38 1350 529)" fill="#484848"/>
          </g>
          <g fill="none" stroke-width="5">
            <g clip-path="url(#cBlue)"><use href="#ringBlue" stroke="#00f"/></g>
            <g clip-path="url(#cGreen)"><use href="#ringGreen" stroke="#0f0"/></g>
            <g clip-path="url(#cRed)"><use href="#ringRed" stroke="#f00"/></g>
          </g>
        </svg>
        <svg class="triad" viewBox="0 0 60 80">
          <path d="M17 45l6-26" stroke="#00f" stroke-width="4"/>
          <path d="M17 45l30-21" stroke="#1de01d" stroke-width="3"/>
          <path d="M17 45l29 24" stroke="#e01515" stroke-width="3"/>
          <circle cx="17" cy="45" r="4" fill="#fff"/>
          <text x="22" y="20">Z</text>
          <text x="45" y="24">Y</text>
          <text x="45" y="70">X</text>
        </svg>
      </div>
      <div class="tabs">
        <div class="tab">
          <svg class="tab-shape" viewBox="0 0 200 30" preserveAspectRatio="none"><path d="M0 0l9 25q2 4 6 4h170q4 0 6-4L199 0" fill="#fff" stroke="#111"/></svg>
          <svg class="tab-icon"><use href="#logo"/></svg>
          <span>as1-oc-214.stp</span>
          <button aria-label="关闭文档"><svg viewBox="0 0 8 8"><path d="M1 1l6 6M7 1L1 7"/></svg></button>
        </div>
      </div>
    </main>
  </div>

  <footer class="statusbar">
    <div class="ime">
      <span class="ime-grip"></span>
      <svg class="ime-logo" viewBox="0 0 22 22"><path d="M2 4l17-3 2 16-17 4z" fill="#f4511e"/><text x="5" y="18">S</text></svg>
      <svg class="ime-mode" viewBox="0 0 12 22"><ellipse cx="6" cy="5" rx="4.500" ry="2.500" fill="none" stroke="#888" stroke-width="1.800"/><path d="M2 16v4h3M10 16v4H7" fill="none" stroke="#444" stroke-width="2.400"/></svg>
    </div>
    <span class="watermark">CSDN @潇湘散客</span>
  </footer>

</body>
</html>
```
FILE: styles.css
```css
* {
  box-sizing: border-box;
}

body {
  margin: 0;
  height: 100vh;
  display: flex;
  flex-direction: column;
  overflow: hidden;
  background: #f0f0f0;
  color: #111;
  font: 16px/24px "Open Sans", "Noto Sans CJK SC", sans-serif;
}

button {
  margin: 0;
  padding: 0;
  border: none;
  background: none;
  color: inherit;
  font: inherit;
}

ul {
  margin: 0;
  padding: 0;
  list-style: none;
}

.sprite {
  position: absolute;
  width: 0;
  height: 0;
}

/* title bar */
.titlebar {
  display: flex;
  align-items: center;
  height: 28px;
  padding-left: 2px;
  background: #fff;
}

.app-icon {
  width: 20px;
  height: 20px;
  margin-right: 5px;
}

.window-buttons {
  display: flex;
  margin-left: auto;
  padding-right: 3px;
}

.window-buttons button {
  display: flex;
  justify-content: center;
  width: 58px;
}

.window-buttons svg {
  width: 14px;
  height: 14px;
  fill: none;
  stroke: #111;
}

/* menu */
.menubar {
  display: flex;
  gap: 18px;
  height: 27px;
  padding: 1px 8px 0;
  background: #fff;
  font-family: "Noto Sans", "Noto Sans CJK SC", sans-serif;
  font-size: 15px;
}

.menubar button {
  height: 26px;
}

.menubar u {
  text-underline-offset: 2px;
}

/* toolbars */
.toolbar-row {
  display: flex;
  height: 40px;
  border-bottom: 1px solid #a5a5a5;
}

.toolbar {
  display: flex;
  align-items: center;
  padding: 0 2px 0 11px;
  border-right: 1px solid #a5a5a5;
  background: radial-gradient(circle, #b4b4b4 1px, transparent 2px) 3px 4px / 4px 4px repeat-y;
}

.toolbar.last {
  border-right: none;
}

.toolbar button {
  display: flex;
  justify-content: center;
  width: 37px;
}

.toolbar svg {
  width: 28px;
  height: 28px;
  overflow: visible;
}

.sep {
  width: 7px;
  height: 30px;
  background: linear-gradient(#cfcfcf, #cfcfcf) center / 1px 100% no-repeat;
}

.glyph-a,
.glyph-s {
  font: italic bold 34px "Liberation Serif", serif;
  fill: #f2d21c;
  stroke: #554b10;
}

.glyph-s {
  font-weight: normal;
  font-size: 36px;
}

.glyph-dim {
  font: bold 11px "Liberation Serif", serif;
  fill: #333;
}

.glyph-mesh {
  font: bold 22px "Liberation Serif", serif;
  fill: #e01b22;
  stroke: #5a0000;
}

/* workspace */
.workspace {
  flex: 1;
  display: flex;
  min-height: 0;
}

.dock {
  display: flex;
  flex-direction: column;
  gap: 2px;
  width: 260px;
  margin-right: 5px;
  padding-top: 1px;
}

.dock-title {
  display: flex;
  align-items: center;
  gap: 14px;
  height: 23px;
  padding: 0 7px 0 4px;
  border: 1px solid #c3c3c3;
  background: #dadada;
}

.dock-title span {
  flex: 1;
}

.dock-title button {
  display: flex;
}

.dock-title svg {
  width: 12px;
  height: 12px;
  fill: none;
  stroke: #444;
  stroke-width: 2;
}

.tree {
  flex: 1;
  border: 1px solid #828790;
  background: #fff;
}

.tree-header {
  padding: 3px 5px 2px;
}

.tree ul ul {
  padding-left: 25px;
}

.node {
  display: flex;
  align-items: center;
  height: 24px;
  margin-left: 6px;
  white-space: nowrap;
}

.node svg {
  width: 18px;
  height: 18px;
  margin: 0 6px 0 12px;
}

.node.leaf {
  margin-left: 25px;
}

.node.leaf svg {
  width: 20px;
  height: 20px;
  margin: 0 6px 0 3px;
}

.selected {
  background: #d9d9d9;
}

.expander {
  width: 12px;
  height: 12px;
  border: 1px solid #5b6b9c;
  border-radius: 2px;
  background: linear-gradient(#0a0aa8, #0a0aa8) center / 8px 2px no-repeat #f4f6fa;
}

.expander.plus {
  background:
    linear-gradient(#0a0aa8, #0a0aa8) center / 8px 2px no-repeat,
    linear-gradient(#0a0aa8, #0a0aa8) center / 2px 8px no-repeat,
    #f4f6fa;
}

/* 3d view */
.document {
  flex: 1;
  display: flex;
  flex-direction: column;
  min-width: 0;
}

.viewport {
  position: relative;
  flex: 1;
  min-height: 0;
  background: #53576c;
}

.scene {
  display: block;
  width: 100%;
  height: 100%;
}

.triad {
  position: absolute;
  right: 40px;
  bottom: 27px;
  width: 60px;
  height: 80px;
}

.triad text {
  font: bold 16px "Liberation Mono", monospace;
  fill: #fff;
  stroke: #fff;
}

/* document tabs */
.tabs {
  height: 30px;
  border-top: 1px solid #8c8c8c;
}

.tab {
  position: relative;
  display: flex;
  align-items: center;
  width: 200px;
  height: 30px;
  margin-top: -1px;
  padding: 0 19px 0 15px;
  font: 13px/20px "Liberation Mono", monospace;
}

.tab > * {
  position: relative;
}

.tab .tab-shape {
  position: absolute;
  inset: 0;
  width: 100%;
  height: 100%;
}

.tab-icon {
  width: 20px;
  height: 20px;
  margin-right: 9px;
}

.tab button {
  display: flex;
  align-items: center;
  justify-content: center;
  width: 14px;
  height: 14px;
  margin-left: auto;
  border: 1px solid #b5482e;
  border-radius: 2px;
  background: #e2694d;
}

.tab button svg {
  width: 8px;
  height: 8px;
  stroke: #fff;
  stroke-width: 2;
}

/* status bar */
.statusbar {
  display: flex;
  align-items: flex-start;
  justify-content: flex-end;
  gap: 148px;
  height: 26px;
  padding-right: 14px;
  border-bottom: 1px solid #d5dfee;
}

.ime {
  display: flex;
  align-items: center;
  width: 63px;
  height: 25px;
  padding: 0 4px;
  background: #fff;
}

.ime-grip {
  width: 6px;
  height: 22px;
  background: radial-gradient(circle, #aaa 1px, transparent 2px) 0 0 / 4px 5px repeat-y;
}

.ime-logo {
  width: 22px;
  height: 22px;
  margin: 0 11px 0 4px;
}

.ime-logo text {
  font: bold 18px "Liberation Sans", sans-serif;
  fill: #fff;
}

.ime-mode {
  width: 12px;
  height: 22px;
}

.watermark {
  color: #8b8b8b;
  font: 19px/16px "Liberation Sans", "Noto Sans CJK SC", sans-serif;
}
```
